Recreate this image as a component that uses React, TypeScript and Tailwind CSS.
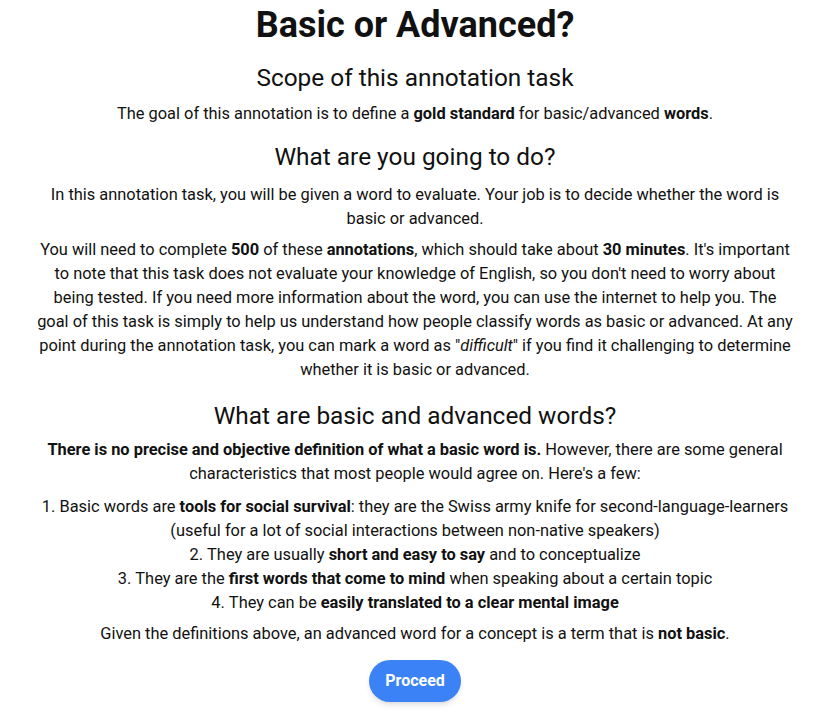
const criteria = [
  <>
    Basic words are <b>tools for social survival</b>: they are the Swiss army knife for second-language-learners (useful for a lot of social interactions between non-native speakers)
  </>,
  <>
    They are usually <b>short and easy to say</b> and to conceptualize
  </>,
  <>
    They are the <b>first words that come to mind</b> when speaking about a certain topic
  </>,
  <>
    They can be <b>easily translated to a clear mental image</b>
  </>,
];

export default function App() {
  return (
    <div className="flex min-h-screen w-full justify-center bg-white pl-2 text-center text-[16.4px] leading-6 text-[#111] [font-family:Roboto,'Liberation_Sans',sans-serif]">
      <main className="flex w-full max-w-[758px] flex-col items-center">
        <h1 className="mt-[5px] text-4xl leading-10 font-bold">Basic or Advanced?</h1>

        <h2 className="mt-[17px] text-[24.4px] leading-8">Scope of this annotation task</h2>
        <p className="mt-2">
          The goal of this annotation is to define a <b>gold standard</b> for basic/advanced <b>words</b>.
        </p>

        <h2 className="mt-[15px] text-[24.4px] leading-8">What are you going to do?</h2>
        <p className="mt-[10px]">
          In this annotation task, you will be given a word to evaluate. Your job is to decide whether the word is basic or advanced.
        </p>
        <p className="mt-[7px]">
          You will need to complete <b>500</b> of these <b>annotations</b>, which should take about <b>30 minutes</b>. It's important to note that this task does not evaluate your knowledge of English, so you don't need to worry about being tested. If you need more information about the word, you can use the internet to help you. The goal of this task is simply to help us understand how people classify words as basic or advanced. At any point during the annotation task, you can mark a word as "<i>difficult</i>" if you find it challenging to determine whether it is basic or advanced.
        </p>

        <h2 className="mt-[18px] text-[24.4px] leading-8">What are basic and advanced words?</h2>
        <p className="mt-[6px]">
          <b>There is no precise and objective definition of what a basic word is.</b> However, there are some general characteristics that most people would agree on. Here's a few:
        </p>
        <ol className="mt-[9px] list-inside list-decimal">
          {criteria.map((item, i) => (
            <li key={i}>{item}</li>
          ))}
        </ol>
        <p className="mt-[7px]">
          Given the definitions above, an advanced word for a concept is a term that is <b>not basic</b>.
        </p>

        <button
          type="button"
          className="mt-[14px] h-[42px] rounded-full bg-[#3b82f6] px-4 text-base font-bold text-white shadow-md"
        >
          Proceed
        </button>
      </main>
    </div>
  );
}
